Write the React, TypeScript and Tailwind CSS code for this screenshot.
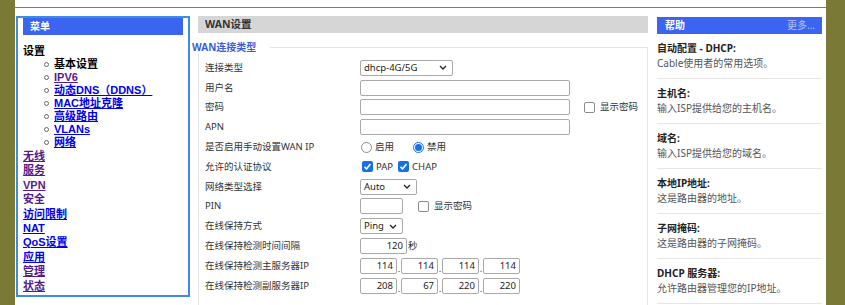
import React from "react";

// 左侧菜单
const subMenu: { t: string; k: "cur" | "v" | "l" }[] = [
  { t: "基本设置", k: "cur" },
  { t: "IPV6", k: "v" },
  { t: "动态DNS（DDNS）", k: "l" },
  { t: "MAC地址克隆", k: "l" },
  { t: "高级路由", k: "l" },
  { t: "VLANs", k: "l" },
  { t: "网络", k: "l" },
];

const topMenu: { t: string; k: "v" | "l" | "h" }[] = [
  { t: "无线", k: "v" },
  { t: "服务", k: "v" },
  { t: "VPN", k: "v" },
  { t: "安全", k: "h" },
  { t: "访问限制", k: "l" },
  { t: "NAT", k: "l" },
  { t: "QoS设置", k: "l" },
  { t: "应用", k: "l" },
  { t: "管理", k: "v" },
  { t: "状态", k: "v" },
];

const linkCls = {
  cur: "text-black",
  v: "text-[#551a8b] underline",
  l: "text-[#0000ee] underline",
  h: "text-[#551a8b]",
};

const helpItems = [
  { t: "自动配置 - DHCP:", d: "Cable使用者的常用选项。" },
  { t: "主机名:", d: "输入ISP提供给您的主机名。" },
  { t: "域名:", d: "输入ISP提供给您的域名。" },
  { t: "本地IP地址:", d: "这是路由器的地址。" },
  { t: "子网掩码:", d: "这是路由器的子网掩码。" },
  { t: "DHCP 服务器:", d: "允许路由器管理您的IP地址。" },
];

const boxCls = "h-[16px] border border-[#a9a9a9] rounded-[2px] bg-white";

function Chevron() {
  return (
    <svg width="8" height="5" viewBox="0 0 8 5" className="shrink-0">
      <polyline points="1,1 4,4 7,1" fill="none" stroke="#222" strokeWidth="1.3" />
    </svg>
  );
}

function Select({ w, value }: { w: string; value: string }) {
  return (
    <div className={`${boxCls} ${w} flex items-center justify-between pl-[3px] pr-[5px] text-[#222]`}>
      <span>{value}</span>
      <Chevron />
    </div>
  );
}

function Input({ w, value }: { w: string; value?: string }) {
  return (
    <div className={`${boxCls} ${w} flex items-center justify-end pr-[3px] text-[#222]`}>{value}</div>
  );
}

function Check({ on }: { on?: boolean }) {
  if (on)
    return (
      <span className="w-[11px] h-[11px] rounded-[2px] bg-[#1670e8] flex items-center justify-center">
        <svg width="9" height="9" viewBox="0 0 9 9">
          <polyline points="1.5,4.8 3.6,6.8 7.5,2" fill="none" stroke="#fff" strokeWidth="1.6" />
        </svg>
      </span>
    );
  return <span className="w-[11px] h-[11px] rounded-[2px] border border-[#8a8a8a] bg-white" />;
}

function Radio({ on }: { on?: boolean }) {
  if (on)
    return (
      <span className="w-[11px] h-[11px] rounded-full border border-[#1670e8] bg-white flex items-center justify-center">
        <span className="w-[7px] h-[7px] rounded-full bg-[#1670e8]" />
      </span>
    );
  return <span className="w-[11px] h-[11px] rounded-full border border-[#8a8a8a] bg-white" />;
}

function Row({ label, children }: { label: string; children?: React.ReactNode }) {
  return (
    <div className="h-[19.8px] flex items-center">
      <div className="w-[155px] shrink-0 text-[#333]">{label}</div>
      <div className="flex items-center">{children}</div>
    </div>
  );
}

function IpRow({ vals }: { vals: string[] }) {
  return (
    <div className="flex items-end">
      {vals.map((v, i) => (
        <React.Fragment key={i}>
          {i > 0 && <span className="w-[4px] text-center leading-[10px] text-[#333]">.</span>}
          <Input w="w-[37px]" value={v} />
        </React.Fragment>
      ))}
    </div>
  );
}

export default function App() {
  return (
    <div className="w-[845px] h-[305px] overflow-hidden flex bg-[#7b7936] [font-family:'Noto_Sans','Noto_Sans_CJK_SC',sans-serif] text-[9.5px]">
      <div className="w-[15px] shrink-0" />
      <div className="w-[811px] shrink-0 bg-white pt-[7px]">
        <div className="h-px bg-[#3b8ad9]" />
        <div className="flex pl-[1px] mt-[8px]">
          {/* 菜单 */}
          <div className="w-[174px] h-[281px] shrink-0 border-2 border-[#3d8ce8] px-[5px] [font-family:'Liberation_Sans','Noto_Sans_CJK_SC',sans-serif] text-[11px] font-bold">
            <div className="h-[17px] bg-[#3b64f0] text-white text-[10px] flex items-center pl-[7px]">菜单</div>
            <div className="mt-[8.5px] leading-[14.4px] text-black">设置</div>
            <ul className="leading-[13px]">
              {subMenu.map((m) => (
                <li key={m.t} className="flex items-center h-[13px] pl-[21px]">
                  <span className="w-[5px] h-[5px] rounded-full border border-[#666] mr-[5px] shrink-0" />
                  <span className={linkCls[m.k]}>{m.t}</span>
                </li>
              ))}
            </ul>
            {topMenu.map((m) => (
              <div key={m.t} className="leading-[14.4px]">
                <span className={linkCls[m.k]}>{m.t}</span>
              </div>
            ))}
          </div>

          {/* WAN设置 */}
          <div className="w-[450px] shrink-0 ml-[8px]">
            <div className="h-[17px] bg-[#d6d6d6] flex items-center pl-[7px] text-[10.5px] font-bold text-[#333]">WAN设置</div>
            <fieldset className="mt-[7px] border border-[#e3e3e3] pl-[6px] pb-[30px]">
              <legend className="-ml-[13px] pr-[14px] bg-white text-[10px] leading-[14px] font-bold text-[#3a5ed8]">WAN连接类型</legend>
              <div className="mt-[4px]">
                <Row label="连接类型">
                  <Select w="w-[93px]" value="dhcp-4G/5G" />
                </Row>
                <Row label="用户名">
                  <Input w="w-[210px]" />
                </Row>
                <Row label="密码">
                  <Input w="w-[210px]" />
                  <span className="ml-[14px] flex items-center gap-[5px] text-[#333]">
                    <Check />
                    显示密码
                  </span>
                </Row>
                <Row label="APN">
                  <Input w="w-[210px]" />
                </Row>
                <Row label="是否启用手动设置WAN IP">
                  <span className="flex items-center gap-[3px] text-[#333] ml-[1px]">
                    <Radio />
                    启用
                  </span>
                  <span className="flex items-center gap-[3px] text-[#333] ml-[19px]">
                    <Radio on />
                    禁用
                  </span>
                </Row>
                <Row label="允许的认证协议">
                  <span className="flex items-center gap-[3px] text-[#333] ml-[2px]">
                    <Check on />
                    PAP
                  </span>
                  <span className="flex items-center gap-[3px] text-[#333] ml-[5px]">
                    <Check on />
                    CHAP
                  </span>
                </Row>
                <Row label="网络类型选择">
                  <Select w="w-[57px]" value="Auto" />
                </Row>
                <Row label="PIN">
                  <Input w="w-[43px]" />
                  <span className="ml-[15px] flex items-center gap-[5px] text-[#333]">
                    <Check />
                    显示密码
                  </span>
                </Row>
                <Row label="在线保持方式">
                  <Select w="w-[43px]" value="Ping" />
                </Row>
                <Row label="在线保持检测时间间隔">
                  <Input w="w-[47px]" value="120" />
                  <span className="ml-[1px] text-[#333]">秒</span>
                </Row>
                <Row label="在线保持检测主服务器IP">
                  <IpRow vals={["114", "114", "114", "114"]} />
                </Row>
                <Row label="在线保持检测副服务器IP">
                  <IpRow vals={["208", "67", "220", "220"]} />
                </Row>
              </div>
            </fieldset>
          </div>

          {/* 帮助 */}
          <div className="w-[165px] shrink-0 ml-[9px] pt-[1px] text-[10px]">
            <div className="h-[17px] bg-[#3b64f0] flex items-center justify-between pl-[8px] pr-[7px]">
              <span className="text-white font-bold">帮助</span>
              <span className="text-[#b7c3f7]">更多...</span>
            </div>
            {helpItems.map((h) => (
              <div key={h.t} className="pt-[7px] pb-[7px] border-b border-[#e6e6e6]">
                <div className="leading-[14px] font-bold text-[#222]">{h.t}</div>
                <div className="leading-[16px] text-[#555]">{h.d}</div>
              </div>
            ))}
          </div>
        </div>
      </div>
      <div className="flex-1" />
    </div>
  );
}
